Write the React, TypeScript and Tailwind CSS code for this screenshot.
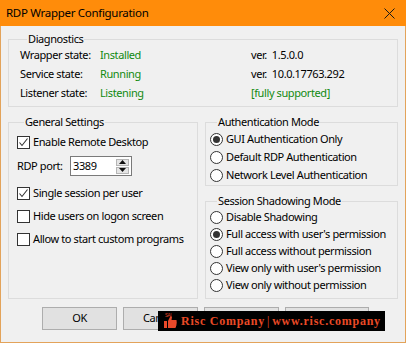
import React from "react";

const font = { fontFamily: '"Noto Sans", "Open Sans", sans-serif' };

function CheckBox({ checked }: { checked?: boolean }) {
  return (
    <span className="w-[13px] h-[13px] border border-[#333333] bg-white flex items-center justify-center shrink-0">
      {checked && (
        <svg width="11" height="11" viewBox="0 0 11 11">
          <path d="M1.5 5.5 L4 8.5 L9.5 1.5" fill="none" stroke="#333" strokeWidth="1.1" />
        </svg>
      )}
    </span>
  );
}

function Radio({ checked }: { checked?: boolean }) {
  return (
    <span className="w-[13px] h-[13px] rounded-full border border-[#333333] bg-white flex items-center justify-center shrink-0">
      {checked && <span className="w-[7px] h-[7px] rounded-full bg-[#333333]" />}
    </span>
  );
}

function CheckRow({ label, checked, mt }: { label: string; checked?: boolean; mt: string }) {
  return (
    <div className={`flex items-center gap-[3px] h-[16px] whitespace-nowrap ${mt}`}>
      <CheckBox checked={checked} />
      <span>{label}</span>
    </div>
  );
}

function RadioRow({ label, checked, h }: { label: string; checked?: boolean; h: string }) {
  return (
    <div className={`flex items-center gap-[3px] whitespace-nowrap ${h}`}>
      <Radio checked={checked} />
      <span>{label}</span>
    </div>
  );
}

function Legend({ children }: { children: React.ReactNode }) {
  return <legend className="ml-[7px] px-[1px] leading-[16px] whitespace-nowrap">{children}</legend>;
}

function Thumb() {
  return (
    <svg width="18" height="18" viewBox="0 0 18 18">
      <text x="4" y="4.5" fontSize="4.5" fill="#e9492a" fontFamily="Liberation Sans">SAI</text>
      <path d="M3 9 h3 v7 h-3 z" fill="#e9492a" />
      <path d="M7 9 L9 5 Q10 3.5 11 5 L10.5 8 H15 Q16.5 8.5 15.5 10 Q16.5 11 15.3 12 Q16.2 13 15 14 Q15.5 15.5 14 16 H7 Z" fill="#e9492a" />
    </svg>
  );
}

export default function App() {
  return (
    <div className="w-[406px] h-[344px] bg-white text-[11px] tracking-[-0.4px] text-black" style={font}>
      <div className="w-[406px] h-[343px] flex flex-col border-x border-b border-[#e3a35a] bg-[#f0f0f0] relative">
        {/* Title bar */}
        <div className="h-[26px] -mx-[1px] bg-[#ff8c0a] flex items-center justify-between pl-[6px] pr-[11px] shrink-0">
          <span className="text-[11.5px] tracking-[-0.3px] whitespace-nowrap">RDP Wrapper Configuration</span>
          <svg width="11" height="11" viewBox="0 0 11 11">
            <path d="M0.5 0.5 L10.5 10.5 M10.5 0.5 L0.5 10.5" stroke="#1a1a1a" strokeWidth="1" />
          </svg>
        </div>

        <div className="flex flex-col px-[7px] pt-[5px]">
          {/* Diagnostics */}
          <fieldset className="border border-[#dcdcdc] pl-[11px] pb-[3px]">
            <Legend>Diagnostics</Legend>
            <div className="grid grid-cols-[80px_151px_1fr] auto-rows-[19px] items-center -mt-[1px] whitespace-nowrap">
              <span>Wrapper state:</span>
              <span className="text-[#118a11]">Installed</span>
              <span>ver.&nbsp; 1.5.0.0</span>
              <span>Service state:</span>
              <span className="text-[#118a11]">Running</span>
              <span>ver.&nbsp; 10.0.17763.292</span>
              <span>Listener state:</span>
              <span className="text-[#118a11]">Listening</span>
              <span className="text-[#118a11]">[fully supported]</span>
            </div>
          </fieldset>

          {/* Lower panels */}
          <div className="flex gap-[7px] mt-[7px]">
            <fieldset className="w-[190px] border border-[#dcdcdc] pl-[8px] flex flex-col">
              <Legend>General Settings</Legend>
              <CheckRow label="Enable Remote Desktop" checked mt="mt-[4px]" />
              <div className="flex items-center mt-[6px] h-[20px] whitespace-nowrap">
                <span className="w-[53px]">RDP port:</span>
                <div className="w-[62px] h-[20px] border border-[#7a7a7a] bg-white flex items-center justify-between pl-[2px] pr-[2px]">
                  <span>3389</span>
                  <div className="flex flex-col gap-[1px]">
                    <span className="w-[13px] h-[7px] bg-[#e5e5e5] border border-[#b5b5b5] flex items-center justify-center">
                      <svg width="7" height="4" viewBox="0 0 7 4"><path d="M0 4 L3.5 0 L7 4 Z" fill="#111" /></svg>
                    </span>
                    <span className="w-[13px] h-[7px] bg-[#e5e5e5] border border-[#b5b5b5] flex items-center justify-center">
                      <svg width="7" height="4" viewBox="0 0 7 4"><path d="M0 0 L3.5 4 L7 0 Z" fill="#111" /></svg>
                    </span>
                  </div>
                </div>
              </div>
              <CheckRow label="Single session per user" checked mt="mt-[9px]" />
              <CheckRow label="Hide users on logon screen" mt="mt-[7px]" />
              <CheckRow label="Allow to start custom programs" mt="mt-[7px]" />
            </fieldset>

            <div className="flex-1 flex flex-col">
              <fieldset className="border border-[#dcdcdc] pl-[4px] pb-[1px]">
                <Legend>Authentication Mode</Legend>
                <RadioRow label="GUI Authentication Only" checked h="h-[18px]" />
                <RadioRow label="Default RDP Authentication" h="h-[18px]" />
                <RadioRow label="Network Level Authentication" h="h-[18px]" />
              </fieldset>
              <fieldset className="border border-[#dcdcdc] pl-[4px] pb-[4px] mt-[7px]">
                <Legend>Session Shadowing Mode</Legend>
                <RadioRow label="Disable Shadowing" h="h-[17px]" />
                <RadioRow label="Full access with user's permission" checked h="h-[17px]" />
                <RadioRow label="Full access without permission" h="h-[17px]" />
                <RadioRow label="View only with user's permission" h="h-[17px]" />
                <RadioRow label="View only without permission" h="h-[17px]" />
              </fieldset>
            </div>
          </div>

          {/* Buttons */}
          <div className="flex mt-[8px] ml-[34px] gap-[6px]">
            <button className="w-[75px] h-[23px] bg-[#e1e1e1] border border-[#adadad]">OK</button>
            <button className="w-[75px] h-[23px] bg-[#e1e1e1] border border-[#adadad] text-left pl-[19px]">Cancel</button>
            <button className="w-[75px] h-[23px] bg-[#e1e1e1] border border-[#adadad]" aria-label="Apply" />
            <button className="w-[84px] h-[23px] bg-[#e1e1e1] border border-[#adadad]" aria-label="License" />
          </div>
        </div>

        {/* Watermark overlay */}
        <div className="absolute left-[157px] top-[311px] w-[227px] h-[20px] bg-black flex items-center pl-[3px] gap-[2px] overflow-hidden">
          <Thumb />
          <span
            className="text-[#ea4a26] font-bold text-[12px] leading-none tracking-[0.75px] whitespace-nowrap"
            style={{ fontFamily: '"Liberation Serif", serif' }}
          >
            Risc Company<span className="mx-[2px] font-normal">|</span>www.risc.company
          </span>
        </div>
      </div>
    </div>
  );
}
